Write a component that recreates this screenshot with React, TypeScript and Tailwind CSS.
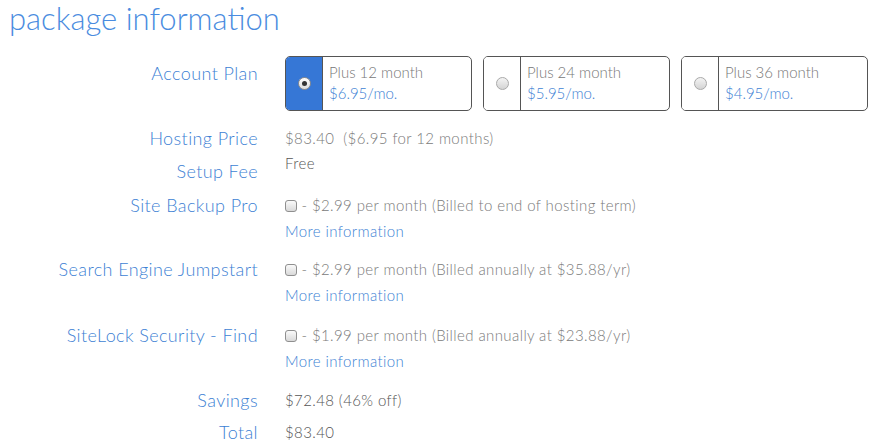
import React from 'react';

const plans = [
  { id: 12, name: 'Plus 12 month', price: '$6.95/mo.' },
  { id: 24, name: 'Plus 24 month', price: '$5.95/mo.' },
  { id: 36, name: 'Plus 36 month', price: '$4.95/mo.' },
];

function Radio({ checked }: { checked: boolean }) {
  if (checked) {
    return (
      <span className="flex h-[13px] w-[13px] items-center justify-center rounded-full border border-[#8d8d8d] bg-gradient-to-b from-white to-[#dcdcdc]">
        <span className="h-[5px] w-[5px] rounded-full bg-[#333]" />
      </span>
    );
  }
  return <span className="h-[13px] w-[13px] rounded-full border border-[#a9a9a9] bg-gradient-to-b from-[#f4f4f4] to-[#d4d4d4]" />;
}

function Checkbox() {
  return <span className="inline-block h-[12px] w-[12px] rounded-[3px] border border-[#8f8f8f] bg-gradient-to-b from-[#fafafa] to-[#d9d9d9] align-[-1px]" />;
}

function Label({ children, className = '' }: { children: React.ReactNode; className?: string }) {
  return <div className={`w-[258px] shrink-0 text-right text-[18px] leading-[22px] tracking-[0.4px] text-[#3d7fd4] ${className}`}>{children}</div>;
}

function Addon({ label, price, note, className = '' }: { label: string; price: string; note: string; className?: string }) {
  return (
    <div className={`flex ${className}`}>
      <Label>{label}</Label>
      <div className="ml-[27px] text-[15px] tracking-[0.4px] text-[#7a7a7a]">
        <div className="leading-[23px]">
          <Checkbox /> - {price} per month ({note})
        </div>
        <div className="leading-[28px] text-[#3d7fd4]">More information</div>
      </div>
    </div>
  );
}

export default function App() {
  const selected = 12;
  return (
    <div className="h-[448px] w-[874px] overflow-hidden bg-white font-['Lato',sans-serif] font-light">
      <h1 className="pl-[9px] text-[31px] leading-[36px] text-[#4a8ce0]">package information</h1>

      <div className="mt-[20px] flex">
        <Label className="pt-[6px]">Account Plan</Label>
        <div className="ml-[27px] flex gap-[11px]">
          {plans.map(p => (
            <div key={p.id} className="flex h-[55px] w-[187px] overflow-hidden rounded-[5px] border border-[#555]">
              <div className={`flex w-[37px] shrink-0 items-center justify-center border-r border-[#555] ${p.id === selected ? 'bg-[#3677d6]' : 'bg-white'}`}>
                <Radio checked={p.id === selected} />
              </div>
              <div className="pl-[6px] pt-[5px] text-[15px]">
                <div className="leading-[20px] text-[#777]">{p.name}</div>
                <div className="leading-[23px] text-[#3d7fd4]">{p.price}</div>
              </div>
            </div>
          ))}
        </div>
      </div>

      <div className="mt-[15px] flex">
        <Label className="pt-[1px]">Hosting Price</Label>
        <div className="ml-[27px] text-[15px] leading-[24px] tracking-[0.4px] text-[#7a7a7a]">$83.40&nbsp;&nbsp;($6.95 for 12 months)</div>
      </div>

      <div className="flex">
        <Label className="pt-[10px]">Setup Fee</Label>
        <div className="ml-[27px] pt-[1px] text-[15px] leading-[24px] tracking-[0.4px] text-[#555]">Free</div>
      </div>

      <Addon className="mt-[12px]" label="Site Backup Pro" price="$2.99" note="Billed to end of hosting term" />
      <Addon className="mt-[13px]" label="Search Engine Jumpstart" price="$2.99" note="Billed annually at $35.88/yr" />
      <Addon className="mt-[15px]" label="SiteLock Security - Find" price="$1.99" note="Billed annually at $23.88/yr" />

      <div className="mt-[14px] flex">
        <Label>Savings</Label>
        <div className="ml-[27px] text-[15px] leading-[22px] tracking-[0.4px] text-[#555]">$72.48 (46% off)</div>
      </div>
      <div className="mt-[10px] flex">
        <Label>Total</Label>
        <div className="ml-[27px] text-[15px] leading-[22px] tracking-[0.4px] text-[#555]">$83.40</div>
      </div>
    </div>
  );
}
